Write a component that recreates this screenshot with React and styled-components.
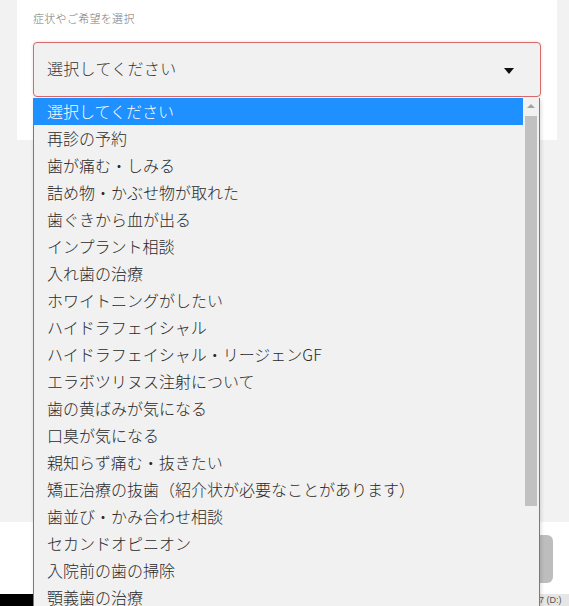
import React from "react";
import styled, { createGlobalStyle } from "styled-components";

const GlobalStyle = createGlobalStyle`
  html, body {
    margin: 0;
    padding: 0;
    background: #f2f2f2;
    overflow: hidden;
  }
  body {
    font-family: "Noto Sans CJK JP", "Noto Sans", sans-serif;
    color: #333;
  }
`;

const OPTIONS = [
  "選択してください",
  "再診の予約",
  "歯が痛む・しみる",
  "詰め物・かぶせ物が取れた",
  "歯ぐきから血が出る",
  "インプラント相談",
  "入れ歯の治療",
  "ホワイトニングがしたい",
  "ハイドラフェイシャル",
  "ハイドラフェイシャル・リージェンGF",
  "エラボツリヌス注射について",
  "歯の黄ばみが気になる",
  "口臭が気になる",
  "親知らず痛む・抜きたい",
  "矯正治療の抜歯（紹介状が必要なことがあります）",
  "歯並び・かみ合わせ相談",
  "セカンドオピニオン",
  "入院前の歯の掃除",
  "顎義歯の治療",
];

const Page = styled.div`
  position: relative;
  display: flex;
  flex-direction: column;
  height: 606px;
`;

const Card = styled.section`
  background: #fff;
  margin: 0 12px 0 17px;
  padding: 10px 16px 0;
  height: 140px;
  box-sizing: border-box;
`;

const Label = styled.div`
  font-size: 11px;
  font-weight: 300;
  color: #777;
  letter-spacing: 0.3px;
  line-height: 16px;
`;

const SelectBox = styled.div`
  margin-top: 16px;
  height: 55px;
  box-sizing: border-box;
  border: 1px solid #d46a6a;
  border-radius: 4px;
  background: #f1f1f1;
  box-shadow: 0 0 3px rgba(220, 80, 80, 0.25);
  display: flex;
  align-items: center;
  justify-content: space-between;
  padding: 0 26px 3px 13px;
  font-size: 16px;
  font-weight: 300;
  letter-spacing: 0.3px;
  color: #333;
`;

const Caret = styled.span`
  width: 0;
  height: 0;
  border-left: 5px solid transparent;
  border-right: 5px solid transparent;
  border-top: 6px solid #111;
  margin-top: 5px;
`;

const Spacer = styled.div`
  flex: 1;
`;

const ActionBand = styled.div`
  background: #fff;
  height: 72px;
  display: flex;
  align-items: center;
  justify-content: flex-end;
  padding: 0 16px 0 40px;
`;

const GrayButton = styled.div`
  flex: 1;
  height: 48px;
  margin-top: 2px;
  border-radius: 6px;
  background: #bdbdbd;
`;

const Footer = styled.div`
  height: 12px;
  background: #000;
  display: flex;
  justify-content: flex-end;
`;

const DriveTag = styled.span`
  width: 31px;
  background: #e6e6e6;
  color: #555;
  font-family: "Liberation Sans", sans-serif;
  font-size: 9px;
  line-height: 12px;
  white-space: nowrap;
  text-indent: 1px;
`;

const Dropdown = styled.div`
  position: absolute;
  top: 98px;
  left: 33px;
  width: 507px;
  height: 520px;
  background: #f1f1f1;
  border: 1px solid #7a7a7a;
  border-top: none;
  box-sizing: border-box;
  display: flex;
  overflow: hidden;
  box-shadow: 1px 2px 4px rgba(0, 0, 0, 0.15);
`;

const OptionList = styled.ul`
  list-style: none;
  margin: 0;
  padding: 0;
  flex: 1;
`;

const Option = styled.li`
  height: 27px;
  line-height: 26px;
  padding-left: 13px;
  font-size: 16px;
  font-weight: 300;
  letter-spacing: 0;
  white-space: nowrap;
  color: ${(p) => (p.$selected ? "#fff" : "#2a2a2a")};
  background: ${(p) => (p.$selected ? "#1e90ff" : "transparent")};
`;

const Scrollbar = styled.div`
  width: 16px;
  background: #f1f1f1;
  display: flex;
  flex-direction: column;
  align-items: center;
`;

const ScrollArrow = styled.span`
  margin-top: 6px;
  width: 0;
  height: 0;
  border-left: 4px solid transparent;
  border-right: 4px solid transparent;
  border-bottom: 4px solid #a3a3a3;
`;

const Thumb = styled.div`
  margin-top: 8px;
  width: 12px;
  height: 390px;
  background: #c1c1c1;
`;

export default function App() {
  return (
    <>
      <GlobalStyle />
      <Page>
        <Card>
          <Label>症状やご希望を選択</Label>
          <SelectBox>
            <span>選択してください</span>
            <Caret />
          </SelectBox>
        </Card>
        <Spacer />
        <ActionBand>
          <GrayButton />
        </ActionBand>
        <Footer>
          <DriveTag>7 (D:)</DriveTag>
        </Footer>
        <Dropdown>
          <OptionList>
            {OPTIONS.map((o, i) => (
              <Option key={o} $selected={i === 0}>
                {o}
              </Option>
            ))}
          </OptionList>
          <Scrollbar>
            <ScrollArrow />
            <Thumb />
          </Scrollbar>
        </Dropdown>
      </Page>
    </>
  );
}
